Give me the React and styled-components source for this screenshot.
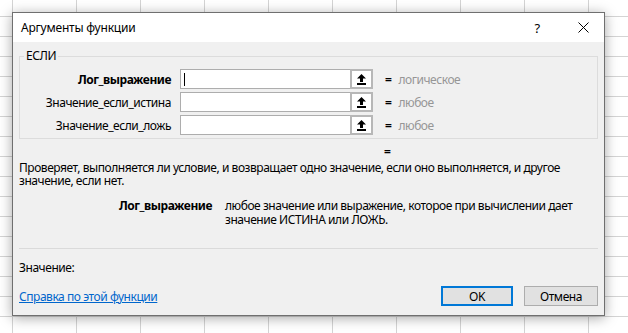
import React from 'react';
import styled, { createGlobalStyle } from 'styled-components';

const GlobalStyle = createGlobalStyle`
    html, body {
        margin: 0;
        padding: 0;
    }
    body {
        width: 628px;
        height: 333px;
        overflow: hidden;
        font-family: "Segoe UI", "Noto Sans", sans-serif;
        font-size: 12px;
        letter-spacing: -0.45px;
        color: #000;
        background-color: #fff;
        background-image:
            linear-gradient(to right, #d4d4d4 1px, transparent 1px),
            linear-gradient(to bottom, #d4d4d4 1px, transparent 1px);
        background-size: 64px 20px;
        background-position: 12px 16px;
    }
`;

const Dialog = styled.div`
    margin: 12px 0 0 12px;
    width: 593px;
    height: 304px;
    box-sizing: border-box;
    border: 1px solid #6f6f6f;
    background: #f0f0f0;
    box-shadow: 0 2px 12px rgba(0, 0, 0, 0.35);
    display: flex;
    flex-direction: column;
`;

const TitleBar = styled.div`
    height: 29px;
    background: #fff;
    display: flex;
    align-items: center;
    padding-left: 8px;
`;

const Title = styled.div`
    flex: 1;
    letter-spacing: -0.2px;
`;

const TitleButton = styled.div`
    width: ${p => p.$w}px;
    height: 29px;
    display: flex;
    align-items: center;
    justify-content: center;
    font-size: 13px;
    color: #000;
`;

const Body = styled.div`
    flex: 1;
    display: flex;
    flex-direction: column;
    padding: 0 6px 0 6px;
`;

const Group = styled.fieldset`
    margin: 6px 0 0 0;
    padding: 5px 0 3px 0;
    border: 1px solid #dcdcdc;
    min-width: 0;
`;

const Legend = styled.legend`
    margin-left: 4px;
    padding: 0 2px;
    line-height: 16px;
`;

const ArgRow = styled.div`
    display: grid;
    grid-template-columns: 160px 171px 22px auto;
    align-items: center;
    height: 20px;
    margin-top: ${p => (p.$first ? 0 : 3)}px;
`;

const ArgLabel = styled.div`
    text-align: right;
    padding-right: 9px;
    font-weight: ${p => (p.$bold ? 700 : 400)};
    white-space: nowrap;
`;

const Input = styled.div`
    height: 20px;
    box-sizing: border-box;
    border: 1px solid #adadad;
    background: #fff;
    display: flex;
    align-items: center;
    padding-left: 3px;
`;

const Caret = styled.span`
    width: 1px;
    height: 13px;
    background: #000;
`;

const RefButton = styled.div`
    height: 20px;
    box-sizing: border-box;
    margin-left: -1px;
    border: 2px solid #b7b7b7;
    background: #fff;
    display: flex;
    align-items: center;
    justify-content: center;
`;

const Result = styled.div`
    padding-left: 12px;
    display: flex;
    gap: 7px;
    white-space: nowrap;
`;

const Eq = styled.span`
    font-weight: 700;
`;

const Hint = styled.span`
    color: #969696;
`;

const TotalEq = styled.div`
    margin-top: 6px;
    padding-left: 365px;
    line-height: 14px;
    font-weight: 700;
`;

const Description = styled.div`
    margin-top: 2px;
    line-height: 13px;
    padding-right: 16px;
`;

const ArgHelp = styled.div`
    margin-top: 12px;
    display: grid;
    grid-template-columns: 193px 1fr;
    column-gap: 13px;
    line-height: 14px;
    padding-right: 20px;
`;

const ArgHelpName = styled.div`
    text-align: right;
    font-weight: 700;
`;

const Separator = styled.div`
    margin-top: 21px;
    height: 1px;
    background: #dadada;
`;

const ValueLine = styled.div`
    margin-top: 12px;
    line-height: 14px;
`;

const Footer = styled.div`
    margin-top: 11px;
    display: flex;
    align-items: center;
    height: 20px;
    gap: 11px;
`;

const HelpLink = styled.a`
    flex: 1;
    color: #0066cc;
    text-decoration: underline;
`;

const Button = styled.div`
    width: ${p => p.$w}px;
    height: 20px;
    box-sizing: border-box;
    border: ${p => (p.$default ? '2px solid #0078d7' : '1px solid #adadad')};
    background: #e1e1e1;
    display: flex;
    align-items: center;
    justify-content: center;
`;

const UpArrow = () => (
    <svg width="9" height="11" viewBox="0 0 9 11">
        <path d="M4.5 0 L9 4.5 L6 4.5 L6 8 L3 8 L3 4.5 L0 4.5 Z" fill="#000" />
        <rect x="0" y="9" width="9" height="2" fill="#000" />
    </svg>
);

const CloseIcon = () => (
    <svg width="11" height="11" viewBox="0 0 11 11">
        <path d="M0.5 0.5 L10.5 10.5 M10.5 0.5 L0.5 10.5" stroke="#000" strokeWidth="1" />
    </svg>
);

const args = [
    { name: 'Лог_выражение', hint: 'логическое', bold: true, caret: true },
    { name: 'Значение_если_истина', hint: 'любое' },
    { name: 'Значение_если_ложь', hint: 'любое' },
];

function App() {
    return (
        <>
            <GlobalStyle />
            <Dialog>
                <TitleBar>
                    <Title>Аргументы функции</Title>
                    <TitleButton $w={50}>?</TitleButton>
                    <TitleButton $w={42}><CloseIcon /></TitleButton>
                </TitleBar>
                <Body>
                    <Group>
                        <Legend>ЕСЛИ</Legend>
                        {args.map((a, i) => (
                            <ArgRow key={a.name} $first={i === 0}>
                                <ArgLabel $bold={a.bold}>{a.name}</ArgLabel>
                                <Input>{a.caret && <Caret />}</Input>
                                <RefButton><UpArrow /></RefButton>
                                <Result>
                                    <Eq>=</Eq>
                                    <Hint>{a.hint}</Hint>
                                </Result>
                            </ArgRow>
                        ))}
                    </Group>
                    <TotalEq>=</TotalEq>
                    <Description>
                        Проверяет, выполняется ли условие, и возвращает одно значение, если оно выполняется, и другое значение, если нет.
                    </Description>
                    <ArgHelp>
                        <ArgHelpName>Лог_выражение</ArgHelpName>
                        <div>любое значение или выражение, которое при вычислении дает значение ИСТИНА или ЛОЖЬ.</div>
                    </ArgHelp>
                    <Separator />
                    <ValueLine>Значение:</ValueLine>
                    <Footer>
                        <HelpLink href="#">Справка по этой функции</HelpLink>
                        <Button $w={72} $default>OK</Button>
                        <Button $w={74}>Отмена</Button>
                    </Footer>
                </Body>
            </Dialog>
        </>
    );
}

export default App;
